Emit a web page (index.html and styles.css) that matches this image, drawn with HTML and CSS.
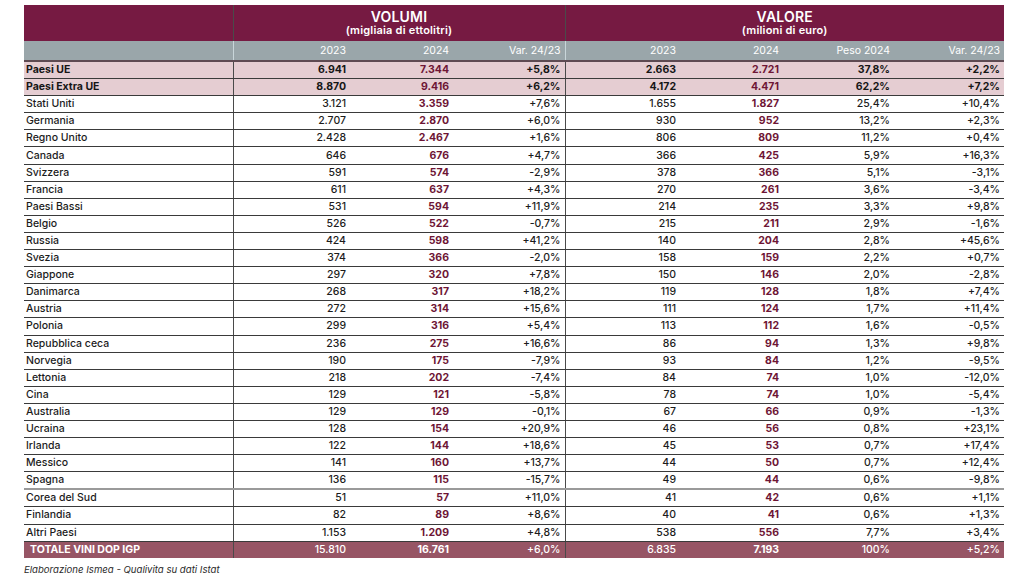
FILE: index.html
```html
<!DOCTYPE html>
<html lang="it">
<head>
<meta charset="utf-8">
<link rel="stylesheet" href="styles.css">
</head>
<body>
<div class="wrap">
<table class="tbl">
  <colgroup>
    <col class="c-name"><col class="c-v1"><col class="c-v2"><col class="c-v3">
    <col class="c-w1"><col class="c-w2"><col class="c-w3"><col class="c-w4">
  </colgroup>
  <thead>
    <tr class="h-main">
      <th class="sep"></th>
      <th colspan="3" class="sep"><div class="h-title">VOLUMI</div><div class="h-sub">(migliaia di ettolitri)</div></th>
      <th colspan="4"><div class="h-title">VALORE</div><div class="h-sub">(milioni di euro)</div></th>
    </tr>
    <tr class="h-cols">
      <th class="sep"></th>
      <th>2023</th><th>2024</th><th class="sep">Var. 24/23</th>
      <th>2023</th><th>2024</th><th>Peso 2024</th><th>Var. 24/23</th>
    </tr>
  </thead>
  <tbody>
    <tr class="agg"><td class="sep">Paesi UE</td><td>6.941</td><td class="hl">7.344</td><td class="sep">+5,8%</td><td>2.663</td><td class="hl">2.721</td><td>37,8%</td><td>+2,2%</td></tr>
    <tr class="agg"><td class="sep">Paesi Extra UE</td><td>8.870</td><td class="hl">9.416</td><td class="sep">+6,2%</td><td>4.172</td><td class="hl">4.471</td><td>62,2%</td><td>+7,2%</td></tr>
    <tr><td class="sep">Stati Uniti</td><td>3.121</td><td class="hl">3.359</td><td class="sep">+7,6%</td><td>1.655</td><td class="hl">1.827</td><td>25,4%</td><td>+10,4%</td></tr>
    <tr><td class="sep">Germania</td><td>2.707</td><td class="hl">2.870</td><td class="sep">+6,0%</td><td>930</td><td class="hl">952</td><td>13,2%</td><td>+2,3%</td></tr>
    <tr><td class="sep">Regno Unito</td><td>2.428</td><td class="hl">2.467</td><td class="sep">+1,6%</td><td>806</td><td class="hl">809</td><td>11,2%</td><td>+0,4%</td></tr>
    <tr><td class="sep">Canada</td><td>646</td><td class="hl">676</td><td class="sep">+4,7%</td><td>366</td><td class="hl">425</td><td>5,9%</td><td>+16,3%</td></tr>
    <tr><td class="sep">Svizzera</td><td>591</td><td class="hl">574</td><td class="sep">-2,9%</td><td>378</td><td class="hl">366</td><td>5,1%</td><td>-3,1%</td></tr>
    <tr><td class="sep">Francia</td><td>611</td><td class="hl">637</td><td class="sep">+4,3%</td><td>270</td><td class="hl">261</td><td>3,6%</td><td>-3,4%</td></tr>
    <tr><td class="sep">Paesi Bassi</td><td>531</td><td class="hl">594</td><td class="sep">+11,9%</td><td>214</td><td class="hl">235</td><td>3,3%</td><td>+9,8%</td></tr>
    <tr><td class="sep">Belgio</td><td>526</td><td class="hl">522</td><td class="sep">-0,7%</td><td>215</td><td class="hl">211</td><td>2,9%</td><td>-1,6%</td></tr>
    <tr><td class="sep">Russia</td><td>424</td><td class="hl">598</td><td class="sep">+41,2%</td><td>140</td><td class="hl">204</td><td>2,8%</td><td>+45,6%</td></tr>
    <tr><td class="sep">Svezia</td><td>374</td><td class="hl">366</td><td class="sep">-2,0%</td><td>158</td><td class="hl">159</td><td>2,2%</td><td>+0,7%</td></tr>
    <tr><td class="sep">Giappone</td><td>297</td><td class="hl">320</td><td class="sep">+7,8%</td><td>150</td><td class="hl">146</td><td>2,0%</td><td>-2,8%</td></tr>
    <tr><td class="sep">Danimarca</td><td>268</td><td class="hl">317</td><td class="sep">+18,2%</td><td>119</td><td class="hl">128</td><td>1,8%</td><td>+7,4%</td></tr>
    <tr><td class="sep">Austria</td><td>272</td><td class="hl">314</td><td class="sep">+15,6%</td><td>111</td><td class="hl">124</td><td>1,7%</td><td>+11,4%</td></tr>
    <tr><td class="sep">Polonia</td><td>299</td><td class="hl">316</td><td class="sep">+5,4%</td><td>113</td><td class="hl">112</td><td>1,6%</td><td>-0,5%</td></tr>
    <tr><td class="sep">Repubblica ceca</td><td>236</td><td class="hl">275</td><td class="sep">+16,6%</td><td>86</td><td class="hl">94</td><td>1,3%</td><td>+9,8%</td></tr>
    <tr><td class="sep">Norvegia</td><td>190</td><td class="hl">175</td><td class="sep">-7,9%</td><td>93</td><td class="hl">84</td><td>1,2%</td><td>-9,5%</td></tr>
    <tr><td class="sep">Lettonia</td><td>218</td><td class="hl">202</td><td class="sep">-7,4%</td><td>84</td><td class="hl">74</td><td>1,0%</td><td>-12,0%</td></tr>
    <tr><td class="sep">Cina</td><td>129</td><td class="hl">121</td><td class="sep">-5,8%</td><td>78</td><td class="hl">74</td><td>1,0%</td><td>-5,4%</td></tr>
    <tr><td class="sep">Australia</td><td>129</td><td class="hl">129</td><td class="sep">-0,1%</td><td>67</td><td class="hl">66</td><td>0,9%</td><td>-1,3%</td></tr>
    <tr><td class="sep">Ucraina</td><td>128</td><td class="hl">154</td><td class="sep">+20,9%</td><td>46</td><td class="hl">56</td><td>0,8%</td><td>+23,1%</td></tr>
    <tr><td class="sep">Irlanda</td><td>122</td><td class="hl">144</td><td class="sep">+18,6%</td><td>45</td><td class="hl">53</td><td>0,7%</td><td>+17,4%</td></tr>
    <tr><td class="sep">Messico</td><td>141</td><td class="hl">160</td><td class="sep">+13,7%</td><td>44</td><td class="hl">50</td><td>0,7%</td><td>+12,4%</td></tr>
    <tr class="soft"><td class="sep">Spagna</td><td>136</td><td class="hl">115</td><td class="sep">-15,7%</td><td>49</td><td class="hl">44</td><td>0,6%</td><td>-9,8%</td></tr>
    <tr><td class="sep">Corea del Sud</td><td>51</td><td class="hl">57</td><td class="sep">+11,0%</td><td>41</td><td class="hl">42</td><td>0,6%</td><td>+1,1%</td></tr>
    <tr><td class="sep">Finlandia</td><td>82</td><td class="hl">89</td><td class="sep">+8,6%</td><td>40</td><td class="hl">41</td><td>0,6%</td><td>+1,3%</td></tr>
    <tr><td class="sep">Altri Paesi</td><td>1.153</td><td class="hl">1.209</td><td class="sep">+4,8%</td><td>538</td><td class="hl">556</td><td>7,7%</td><td>+3,4%</td></tr>
    <tr class="total"><td class="sep">TOTALE VINI DOP IGP</td><td>15.810</td><td class="hl">16.761</td><td class="sep">+6,0%</td><td>6.835</td><td class="hl">7.193</td><td>100%</td><td>+5,2%</td></tr>
  </tbody>
</table>
<p class="note">Elaborazione Ismea - Qualivita su dati Istat</p>
</div>
</body>
</html>
```

FILE: styles.css
```css
html, body {
  margin: 0;
  padding: 0;
  background: #ffffff;
}
body {
  font-family: "Inter", "DejaVu Sans", sans-serif;
  color: #1c1c1c;
}
.wrap {
  padding: 5px 0 0 24px;
}
.tbl {
  width: 980px;
  table-layout: fixed;
  border-collapse: collapse;
  font-size: 10.5px;
  font-weight: 500;
}
.c-name { width: 209px; }
.c-v1 { width: 117px; }
.c-v2 { width: 103px; }
.c-v3 { width: 112px; }
.c-w1 { width: 115px; }
.c-w2 { width: 103px; }
.c-w3 { width: 111px; }
.c-w4 { width: 110px; }

.h-main th {
  background: #761a42;
  color: #ffffff;
  height: 36px;
  padding: 0;
  text-align: center;
  vertical-align: middle;
  font-weight: 600;
}
.h-title {
  font-size: 14px;
  line-height: 15px;
  letter-spacing: 0.2px;
}
.h-sub {
  font-size: 11px;
  line-height: 13px;
  font-weight: 600;
  letter-spacing: 0.2px;
}
.h-cols th {
  background: #9aa6aa;
  color: #ffffff;
  height: 19px;
  padding: 0 4px 0 0;
  text-align: right;
  font-weight: 400;
  font-size: 10.5px;
  border-bottom: 2px solid #5e4a52;
}
.tbl td {
  height: 16.1px;
  padding: 0 4px 0 0;
  text-align: right;
  border-bottom: 1px solid #3a3a3a;
  white-space: nowrap;
  line-height: 14px;
}
.tbl td:first-child {
  text-align: left;
  padding: 0 0 0 2px;
}
.tbl .sep {
  border-right: 1.5px solid #4a4a4a;
}
.h-cols th.sep {
  border-right: 1.5px solid #c9d6da;
}
.tbl td.hl {
  color: #6e1535;
  font-weight: 700;
}
.agg td {
  background: #e5cdd2;
  font-weight: 700;
  color: #161616;
}
.soft td {
  border-bottom: 2px solid #9a9a9a;
}
.total td {
  background: #975565;
  color: #ffffff;
  font-weight: 500;
  border-bottom: none;
}
.total td:first-child {
  font-weight: 700;
  padding-left: 6px;
}
.total td.hl {
  color: #ffffff;
  font-weight: 700;
}
.note {
  margin: 6px 0 0 0;
  font-size: 9.6px;
  font-style: italic;
  font-weight: 400;
  color: #2a2a2a;
}
```
